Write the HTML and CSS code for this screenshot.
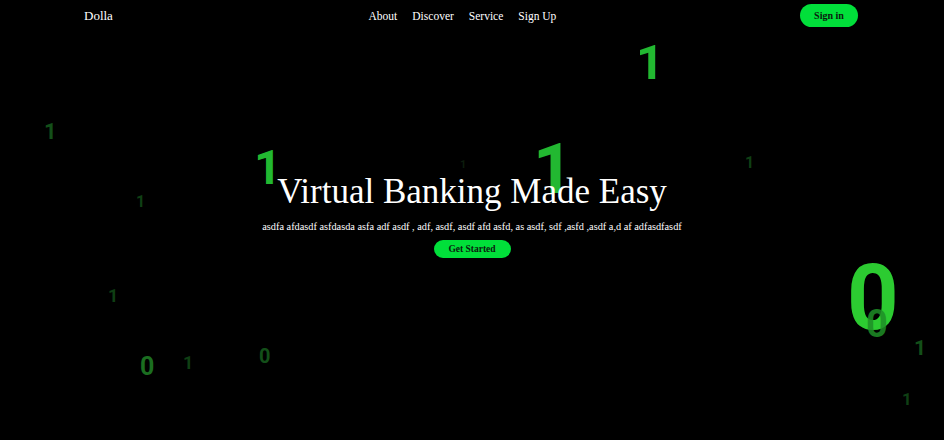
FILE: index.html
```html
<!DOCTYPE html>
<html>
<head>
<meta charset="utf-8">
<link rel="stylesheet" href="styles.css">
</head>
<body>
<div class="page">
  <div class="digits">
    <span class="d bright" style="left:636px;top:38px;font-size:49px">1</span>
    <span class="d dark" style="left:44px;top:121px;font-size:22px">1</span>
    <span class="d bright" style="left:254px;top:144px;font-size:48px">1</span>
    <span class="d faint" style="left:460px;top:159px;font-size:11px">1</span>
    <span class="d bright" style="left:533px;top:134px;font-size:70px">1</span>
    <span class="d dim" style="left:745px;top:155px;font-size:16px">1</span>
    <span class="d dim" style="left:136px;top:194px;font-size:16px">1</span>
    <span class="d dim" style="left:108px;top:287px;font-size:18px">1</span>
    <span class="d mid" style="left:140px;top:354px;font-size:25px">0</span>
    <span class="d dim" style="left:183px;top:354px;font-size:18px">1</span>
    <span class="d dark" style="left:259px;top:346px;font-size:20px">0</span>
    <span class="d huge" style="left:847px;top:254px;font-size:90px">0</span>
    <span class="d midb" style="left:866px;top:305px;font-size:38px">0</span>
    <span class="d dark" style="left:914px;top:338px;font-size:21px">1</span>
    <span class="d dim" style="left:902px;top:391px;font-size:17px">1</span>
  </div>
  <header class="nav">
    <div class="logo">Dolla</div>
    <nav class="links">
      <a>About</a>
      <a>Discover</a>
      <a>Service</a>
      <a>Sign Up</a>
    </nav>
    <button class="btn signin">Sign in</button>
  </header>
  <main class="hero">
    <h1 class="title">Virtual Banking Made Easy</h1>
    <p class="sub">asdfa afdasdf asfdasda asfa adf asdf , adf, asdf, asdf afd asfd, as asdf, sdf ,asfd ,asdf a,d af adfasdfasdf</p>
    <button class="btn start">Get Started</button>
  </main>
</div>
</body>
</html>
```
FILE: styles.css
```css
* { box-sizing: border-box; }
html, body { margin: 0; padding: 0; background: #000; }
body {
  width: 944px;
  height: 440px;
  overflow: hidden;
  font-family: "Liberation Serif", "Times New Roman", serif;
  color: #fff;
}
.page { position: relative; width: 944px; height: 440px; }
.digits { position: absolute; inset: 0; z-index: 0; }
.d {
  position: absolute;
  font-family: Roboto, "Noto Sans", sans-serif;
  font-weight: 700;
  line-height: 1;
}
.bright { color: #22b831; }
.huge { color: #2fd634; opacity: 0.95; }
.midb { color: #1f8f27; opacity: 0.85; }
.mid { color: #1b6e20; }
.dark { color: #134f19; }
.dim { color: #0f3f14; }
.faint { color: #0c1c0d; }

.nav {
  position: relative;
  z-index: 1;
  display: flex;
  align-items: center;
  justify-content: space-between;
  height: 31px;
  padding: 0 86px 0 84px;
}
.logo { font-size: 13px; }
.links { display: flex; gap: 15px; font-size: 11.5px; margin-left: 12px; }
.links a { color: #fff; }
.btn {
  border: none;
  background: #01df3a;
  color: #0b1a0e;
  font-family: "Liberation Serif", "Times New Roman", serif;
  font-weight: 700;
  border-radius: 50px;
  cursor: pointer;
}
.signin { width: 58px; height: 23px; font-size: 10px; padding: 0; }
.hero {
  position: relative;
  z-index: 1;
  display: flex;
  flex-direction: column;
  align-items: center;
  padding-top: 139px;
}
.title {
  margin: 0;
  font-weight: 400;
  font-size: 35px;
  line-height: 44px;
}
.sub {
  margin: 6px 0 0;
  font-size: 10.3px;
  line-height: 14px;
}
.start { width: 77px; height: 18px; font-size: 9.5px; padding: 0; margin-top: 6px; }
```
